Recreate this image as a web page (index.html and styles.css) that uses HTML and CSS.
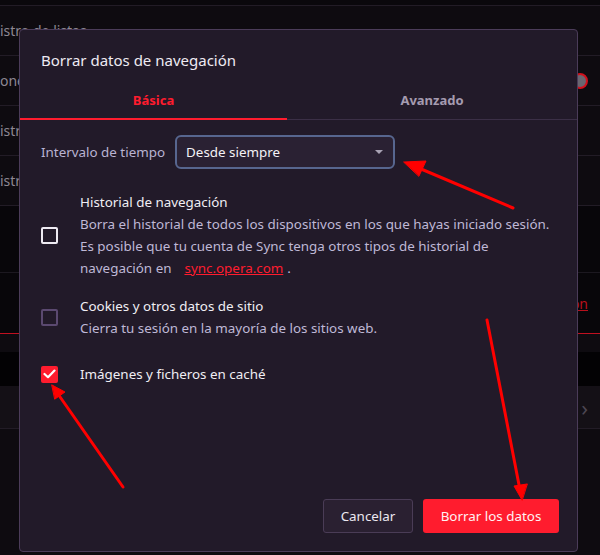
FILE: index.html
```html
<!DOCTYPE html>
<html lang="es">
<head>
  <meta charset="UTF-8" />
  <title>Borrar datos de navegación</title>
  <link rel="stylesheet" href="styles.css">
</head>
<body>
  <div class="pagina">
    <div class="franja"></div>
    <div class="fila"><span>istro de listas</span></div>
    <div class="fila"><span>ones</span><span class="toggle"></span></div>
    <div class="fila"><span>istro</span></div>
    <div class="fila"><span>istro</span></div>
    <div class="fila oscura alta"></div>
    <div class="fila oscura media"><span></span><a class="enlace-fondo">ón</a></div>
    <div class="fila corta"></div>
    <div class="fila negra"></div>
    <div class="fila gris"><span></span><span class="chevron">&#8250;</span></div>
  </div>

  <div class="dialogo">
    <h1 class="titulo">Borrar datos de navegación</h1>
    <div class="pestanas">
      <div class="pestana activa">Básica</div>
      <div class="pestana">Avanzado</div>
    </div>

    <div class="cuerpo">
      <div class="intervalo">
        <span class="etiqueta">Intervalo de tiempo</span>
        <div class="selector">
          <span>Desde siempre</span>
          <span class="flecha"></span>
        </div>
      </div>

      <div class="opcion">
        <span class="casilla blanca"></span>
        <div class="texto">
          <div class="nombre">Historial de navegación</div>
          <div class="detalle">Borra el historial de todos los dispositivos en los que hayas iniciado sesión. Es posible que tu cuenta de Sync tenga otros tipos de historial de</div>
          <div class="detalle linea-enlace">
            <span>navegación en</span>
            <a class="enlace">sync.opera.com</a>
            <span>.</span>
          </div>
        </div>
      </div>

      <div class="opcion">
        <span class="casilla"></span>
        <div class="texto">
          <div class="nombre">Cookies y otros datos de sitio</div>
          <div class="detalle">Cierra tu sesión en la mayoría de los sitios web.</div>
        </div>
      </div>

      <div class="opcion ultima">
        <span class="casilla marcada">
          <svg width="13" height="10" viewBox="0 0 13 10"><path d="M1.5 5 L5 8.2 L11.5 1.6" fill="none" stroke="#fff" stroke-width="2.2" stroke-linecap="round" stroke-linejoin="round"/></svg>
        </span>
        <div class="texto">
          <div class="nombre">Imágenes y ficheros en caché</div>
        </div>
      </div>
    </div>

    <div class="botones">
      <button class="boton cancelar">Cancelar</button>
      <button class="boton borrar">Borrar los datos</button>
    </div>
  </div>

  <svg class="flechas" width="600" height="555" viewBox="0 0 600 555">
    <g fill="#ff0000" stroke="#ff0000" stroke-width="3" stroke-linecap="round">
      <line x1="513" y1="208" x2="414" y2="166" />
      <polygon points="404,162 426,161 419,176" stroke-width="1" />
      <line x1="123" y1="487" x2="58" y2="394" />
      <polygon points="52,385 65,392 55,399" stroke-width="1" />
      <line x1="487" y1="320" x2="520" y2="490" />
      <polygon points="522,500 514,486 527,484" stroke-width="1" />
    </g>
  </svg>
</body>
</html>
```

FILE: styles.css
```css
body {
  margin: 0;
  width: 600px;
  height: 555px;
  overflow: hidden;
  background: #0e0b10;
  font-family: "Noto Sans", "Open Sans", sans-serif;
  position: relative;
}

/* pagina de ajustes detras del dialogo */
.pagina {
  width: 600px;
}
.franja {
  height: 5px;
  border-bottom: 1px solid #221c26;
  background: #0a080c;
}
.fila {
  height: 49px;
  border-bottom: 1px solid #221c26;
  display: flex;
  align-items: center;
  justify-content: space-between;
  padding-right: 12px;
  color: #8d8792;
  font-size: 14px;
}
.fila.alta { height: 66px; }
.fila.media { height: 60px; }
.fila.corta { height: 18px; border-bottom: none; }
.fila.oscura { background: #08060a; border-bottom-color: #1c1820; }
.fila.negra { height: 34px; background: #030204; border-bottom: none; }
.fila.gris { height: 42px; background: #141016; }
.fila.media { border-bottom: 1px solid #c01020; }
.toggle {
  width: 12px;
  height: 12px;
  border: 2px solid #d0101c;
  border-radius: 50%;
  background: #6a6670;
}
.enlace-fondo {
  color: #b8101c;
  text-decoration: underline;
  font-size: 14px;
}
.chevron {
  color: #4c4652;
  font-size: 22px;
}

/* dialogo */
.dialogo {
  position: absolute;
  left: 19px;
  top: 29px;
  width: 557px;
  height: 521px;
  background: #221a29;
  border: 1px solid #4b3c59;
  border-radius: 4px;
  display: flex;
  flex-direction: column;
}
.titulo {
  margin: 0;
  padding: 19px 21px 0;
  font-size: 15px;
  font-weight: normal;
  color: #eeeaf2;
  line-height: 22px;
}
.pestanas {
  display: flex;
  margin-top: 18px;
  border-bottom: 1px solid #3b2f46;
}
.pestana {
  flex: 1;
  text-align: center;
  font-size: 13px;
  font-weight: bold;
  color: #a59bb0;
  height: 31px;
  line-height: 22px;
  box-sizing: border-box;
  border-bottom: 2px solid transparent;
  margin-bottom: -1px;
}
.pestana.activa {
  flex: none;
  width: 267px;
  color: #ff1c2e;
  border-bottom-color: #ff1c2e;
}

.cuerpo {
  flex: 1;
  padding: 15px 21px 0;
}
.intervalo {
  display: flex;
  align-items: center;
  gap: 10px;
}
.etiqueta {
  font-size: 13.4px;
  color: #b9b3d2;
}
.selector {
  width: 220px;
  height: 34px;
  box-sizing: border-box;
  border: 2px solid #57668f;
  border-radius: 6px;
  background: #2a2133;
  display: flex;
  align-items: center;
  justify-content: space-between;
  padding: 0 10px 0 9px;
  font-size: 13.4px;
  color: #f4f2f6;
}
.flecha {
  width: 0;
  height: 0;
  border-left: 4px solid transparent;
  border-right: 4px solid transparent;
  border-top: 4px solid #a8a2b4;
}

.opcion {
  display: flex;
  align-items: center;
  gap: 22px;
  margin-top: 22px;
}
.opcion + .opcion { margin-top: 16px; }
.opcion.ultima { margin-top: 24px; }
.texto {
  font-size: 13.4px;
  line-height: 22px;
}
.nombre { color: #f0eef4; }
.detalle { color: #bfb8d6; }
.linea-enlace {
  display: flex;
  gap: 4px;
}
.enlace {
  color: #ff1c2e;
  text-decoration: underline;
  margin-left: 9px;
}
.casilla {
  flex: none;
  width: 17px;
  height: 17px;
  box-sizing: border-box;
  border: 2px solid #5b4970;
  border-radius: 2px;
  display: flex;
  align-items: center;
  justify-content: center;
}
.casilla.blanca { border-color: #eeeaf2; }
.casilla.marcada {
  border: none;
  background: #ff1c2e;
}

.botones {
  display: flex;
  justify-content: flex-end;
  gap: 10px;
  padding: 0 18px 18px;
}
.boton {
  height: 34px;
  border-radius: 3px;
  font-family: inherit;
  font-size: 13.4px;
  padding: 0;
  cursor: pointer;
}
.cancelar {
  width: 90px;
  background: #2a2031;
  border: 1px solid #4a3c56;
  color: #ece8f0;
}
.borrar {
  width: 136px;
  background: #ff1c2e;
  border: none;
  color: #fff2f3;
}

.flechas {
  position: absolute;
  left: 0;
  top: 0;
}
```
